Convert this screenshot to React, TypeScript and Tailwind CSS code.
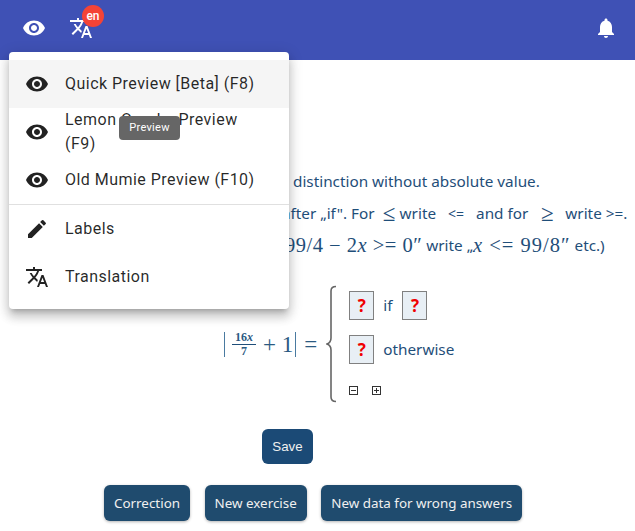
const eye = "M12 4.5C7 4.5 2.73 7.61 1 12c1.73 4.39 6 7.5 11 7.5s9.27-3.11 11-7.5c-1.73-4.39-6-7.5-11-7.5zM12 17c-2.76 0-5-2.24-5-5s2.24-5 5-5 5 2.24 5 5-2.24 5-5 5zm0-8c-1.66 0-3 1.34-3 3s1.34 3 3 3 3-1.34 3-3-1.34-3-3-3z";
const translate = "m12.87 15.07-2.54-2.51.03-.03c1.74-1.94 2.98-4.17 3.71-6.53H17V4h-7V2H8v2H1v1.99h11.17C11.5 7.92 10.44 9.75 9 11.35 8.07 10.32 7.3 9.19 6.69 8h-2c.73 1.63 1.73 3.17 2.98 4.56l-5.09 5.02L4 19l5-5 3.11 3.11.76-2.04zM18.5 10h-2L12 22h2l1.12-3h4.75L21 22h2l-4.5-12zm-2.62 7 1.62-4.33L19.12 17h-3.24z";
const edit = "M3 17.25V21h3.75L17.81 9.94l-3.75-3.75L3 17.25zM20.71 7.04c.39-.39.39-1.02 0-1.41l-2.34-2.34a.9959.9959 0 0 0-1.41 0l-1.83 1.83 3.75 3.75 1.83-1.83z";
const bell = "M12 22c1.1 0 2-.9 2-2h-4c0 1.1.89 2 2 2zm6-6v-5c0-3.07-1.64-5.64-4.5-6.32V4c0-.83-.67-1.5-1.5-1.5s-1.5.67-1.5 1.5v.68C7.63 5.36 6 7.92 6 11v5l-2 2v1h16v-1l-2-2z";

function Icon({ d, className = "" }: { d: string; className?: string }) {
  return (
    <svg viewBox="0 0 24 24" width="24" height="24" fill="currentColor" className={className}>
      <path d={d} />
    </svg>
  );
}

function Item({ d, label, active }: { d: string; label: string; active?: boolean }) {
  return (
    <div className={`flex h-12 items-center pl-4 pr-4 ${active ? "bg-[#f5f5f5]" : ""}`}>
      <div className="w-10 shrink-0 text-[#222222]">
        <Icon d={d} />
      </div>
      <div className="max-w-[195px] text-[16px] leading-[24px] tracking-[0.47px] text-black/85">{label}</div>
    </div>
  );
}

function QBox() {
  return (
    <div className="flex h-[29px] w-[25px] items-center justify-center border border-[#808080] bg-[#e8eff5] font-['Open_Sans',sans-serif] text-[17px] font-bold text-[#f00000]">
      ?
    </div>
  );
}

function Btn({ children }: { children: React.ReactNode }) {
  return (
    <div className="flex h-9 items-center rounded-md bg-[#1f4b6e] px-[10px] text-[13.4px] text-[#f0f0f0] shadow-[0_1px_3px_rgba(0,0,0,0.3)]">
      {children}
    </div>
  );
}

const M = "font-['Liberation_Serif',serif]";

export default function App() {
  return (
    <div className="relative h-[531px] w-[635px] overflow-hidden bg-white font-['Noto_Sans',sans-serif]">
      <header className="flex h-[60px] items-start justify-between bg-[#3f51b5] text-white">
        <div className="flex items-center pl-[22px] pt-4">
          <Icon d={eye} />
          <div className="relative ml-[23px]">
            <Icon d={translate} />
            <div className="absolute -top-[11px] left-[13px] flex h-[22px] w-[22px] items-center justify-center rounded-full bg-[#f44336] font-['Roboto',sans-serif] text-[12px] font-medium leading-none">
              en
            </div>
          </div>
        </div>
        <div className="pr-[17px] pt-4">
          <Icon d={bell} />
        </div>
      </header>

      <main className="text-[15.3px] text-[#1f4e79]">
        <div className="mt-[105px] flex h-8 items-center pl-[293px]">distinction without absolute value.</div>
        <div className="flex h-8 items-center whitespace-pre pl-[282px]">
          <span>after „if". For </span>
          <span className={`${M} flex w-[21px] justify-center text-[23px] leading-none`}>≤</span>
          <span>write</span>
          <span className="ml-[12px] text-[14px]">&lt;=</span>
          <span className="ml-[12px]">and for</span>
          <span className={`${M} ml-[11px] mr-[10px] flex w-[16px] justify-center text-[23px] leading-none`}>≥</span>
          <span>write &gt;=.</span>
        </div>
        <div className="flex h-8 items-center whitespace-pre pl-[285px]">
          <span className={`${M} text-[20.5px] tracking-[0.5px]`}>99/4 − 2<i>x</i> &gt;= 0″</span>
          <span> write „</span>
          <span className={`${M} text-[20.5px] tracking-[1px]`}><i>x</i> &lt;= 99/8″</span>
          <span> etc.)</span>
        </div>

        <div className="mt-[24px] flex items-center pl-[224px]">
          <div className={`${M} flex items-center text-[23px] leading-none text-[#2b5a82]`}>
            <span className="h-[25px] w-px bg-[#4a7aa0]" />
            <div className="ml-[7px] mr-[7px] flex flex-col items-center text-[12px] font-bold leading-[12px]">
              <span className="border-b border-[#1f4e79] px-[3px] pb-px">16<i>x</i></span>
              <span>7</span>
            </div>
            <span className="font-light">+ 1</span>
            <span className="ml-[2px] h-[25px] w-px bg-[#4a7aa0]" />
            <span className="ml-[8px]">=</span>
          </div>
          <svg width="12" height="118" viewBox="0 0 12 118" className="ml-[9px] shrink-0">
            <path d="M10 1.5 C6.5 1.5 5 2.5 5 6 V53 C5 56 4 58 1 59 C4 60 5 62 5 65 V112 C5 115.5 6.5 116.5 10 116.5" fill="none" stroke="#666" strokeWidth="1.6" />
          </svg>
          <div className="ml-[11px] flex flex-col pb-[2px]">
            <div className="flex items-center">
              <QBox />
              <span className="ml-[9px] mr-[10px]">if</span>
              <QBox />
            </div>
            <div className="mt-[15px] flex items-center">
              <QBox />
              <span className="ml-[9px]">otherwise</span>
            </div>
            <div className="mt-[22px] flex items-center gap-[14px]">
              <div className="flex h-[9px] w-[9px] items-center justify-center border border-[#333]">
                <span className="h-px w-[5px] bg-[#333]" />
              </div>
              <div className="relative flex h-[9px] w-[9px] items-center justify-center border border-[#333]">
                <span className="h-px w-[5px] bg-[#333]" />
                <span className="absolute h-[5px] w-px bg-[#333]" />
              </div>
            </div>
          </div>
        </div>

        <div className="mt-[26px] pl-[262px]">
          <div className="flex h-[35px] w-[51px] items-center justify-center rounded-md bg-[#1b4a76] font-['Liberation_Sans',sans-serif] text-[13.3px] text-[#f0f0f0]">
            Save
          </div>
        </div>
        <div className="mt-[21px] flex gap-[14.5px] pl-[104px]">
          <Btn>Correction</Btn>
          <Btn>New exercise</Btn>
          <Btn>New data for wrong answers</Btn>
        </div>
      </main>

      <div className="absolute left-[9px] top-[52px] w-[280px] rounded bg-white py-2 font-['Roboto',sans-serif] shadow-[0_5px_5px_-3px_rgba(0,0,0,0.2),0_8px_10px_1px_rgba(0,0,0,0.14),0_3px_14px_2px_rgba(0,0,0,0.12)]">
        <Item d={eye} label="Quick Preview [Beta] (F8)" active />
        <Item d={eye} label="Lemon Quarks Preview (F9)" />
        <Item d={eye} label="Old Mumie Preview (F10)" />
        <div className="h-px bg-[#e0e0e0]" />
        <Item d={edit} label="Labels" />
        <Item d={translate} label="Translation" />
      </div>

      <div className="absolute left-[119px] top-[116px] flex h-6 w-[61px] items-center justify-center rounded bg-[#666666] font-['Roboto',sans-serif] text-[11px] tracking-[0.3px] text-white">
        Preview
      </div>
    </div>
  );
}
